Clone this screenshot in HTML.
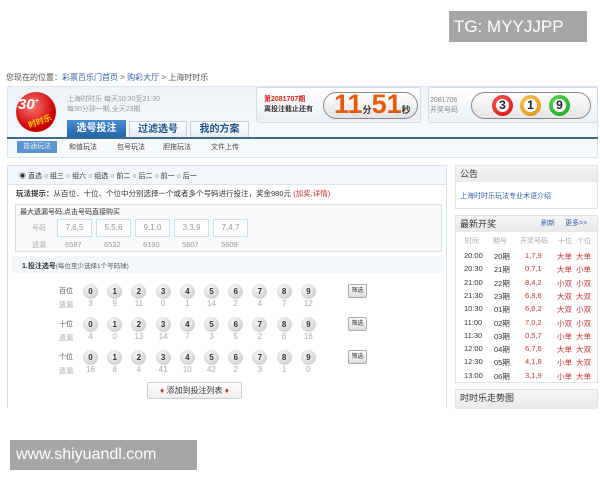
<!DOCTYPE html><html><head><meta charset="utf-8"><style>
*{margin:0;padding:0;box-sizing:border-box}
body{width:600px;height:480px;background:#fff;position:relative;overflow:hidden;font-family:"Liberation Sans","Noto Sans CJK SC",sans-serif;font-size:8px;color:#333}
.a{position:absolute;white-space:nowrap}
.ball{position:absolute;width:15px;height:15px;border-radius:50%;background:radial-gradient(circle at 40% 35%,#fafafa,#d8d8d8 60%,#bbb);font-size:8px;font-weight:bold;text-align:center;line-height:15px;color:#333}
.miss{position:absolute;font-size:8px;color:#aaa;width:15px;text-align:center}
.big{position:absolute;width:21px;height:21px;border-radius:50%;text-align:center;line-height:21px;font-weight:bold;font-size:12px;color:#222}
.big span{display:inline-block;width:13px;height:13px;line-height:13px;border-radius:50%;background:#fff;margin-top:4px}
.btn{position:absolute;width:19px;height:14px;border:1px solid #aaa;border-radius:2px;background:linear-gradient(#fff,#ddd);font-size:6px;text-align:center;line-height:12px}
.cell{position:absolute;width:35px;height:18px;border:1px solid #d5dde5;background:#fff;color:#999;text-align:center;line-height:16px;font-size:8px}
.r{color:#c33}
</style></head><body>
<div class="a" style="left:449px;top:11px;width:138px;height:31px;background:#a6a6a6;color:#fff;font-size:17px;line-height:31px;padding-left:5px">TG: MYYJJPP</div>
<div class="a" style="left:10px;top:440px;width:187px;height:30px;background:#a6a6a6;color:#fff;font-size:16px;line-height:30px;padding-left:6px">www.shiyuandl.com</div>

<div class="a" style="left:6px;top:72px;font-size:8px;color:#555">您现在的位置：<span style="color:#3a64a8">彩票百乐门首页</span> &gt; <span style="color:#3a64a8">购彩大厅</span> &gt; 上海时时乐</div>

<div class="a" style="left:7px;top:86px;width:591px;height:72px;background:linear-gradient(#eef3f9,#f9fbfd);border:1px solid #dde5ee"></div>
<div class="a" style="left:16px;top:92px;width:40px;height:40px;border-radius:50%;background:radial-gradient(circle at 40% 35%,#f77,#c00 65%,#900)"></div>
<div class="a" style="left:18px;top:96px;color:#fff;font-size:15px;font-weight:bold;font-style:italic">30<sup style="font-size:7px">+</sup></div>
<div class="a" style="left:28px;top:116px;color:#fc0;font-size:8px;font-weight:bold;transform:rotate(-20deg)">时时乐</div>
<div class="a" style="left:67px;top:95px;color:#999;font-size:7px;line-height:10px">上海时时乐 每天10:30至21:30<br>每30分钟一期,全天23期</div>
<div class="a" style="left:67px;top:120px;width:59px;height:18px;background:linear-gradient(#4a8ccc,#1f63a8);color:#fff;font-size:10px;font-weight:bold;text-align:center;line-height:18px">选号投注</div>
<div class="a" style="left:129px;top:121px;width:58px;height:17px;background:linear-gradient(#fff,#e6ecf3);border:1px solid #c5d0dc;color:#1f4f88;font-size:10px;font-weight:bold;text-align:center;line-height:16px">过滤选号</div>
<div class="a" style="left:190px;top:121px;width:59px;height:17px;background:linear-gradient(#fff,#e6ecf3);border:1px solid #c5d0dc;color:#1f4f88;font-size:10px;font-weight:bold;text-align:center;line-height:16px">我的方案</div>
<div class="a" style="left:7px;top:137px;width:591px;height:2px;background:#3d6a8f"></div>
<div class="a" style="left:17px;top:141px;width:40px;height:12px;background:#5b95d0;color:#e8f0ff;font-size:7px;text-align:center;line-height:12px">普通玩法</div>
<div class="a" style="left:69px;top:142px;font-size:7px;color:#444">和值玩法</div>
<div class="a" style="left:117px;top:142px;font-size:7px;color:#444">包号玩法</div>
<div class="a" style="left:163px;top:142px;font-size:7px;color:#444">胆拖玩法</div>
<div class="a" style="left:211px;top:142px;font-size:7px;color:#444">文件上传</div>

<div class="a" style="left:256px;top:87px;width:165px;height:36px;background:linear-gradient(#fff,#eaeff5);border:1px solid #d3dbe4;border-radius:3px"></div>
<div class="a" style="left:264px;top:95px;font-size:7px;line-height:10px;font-weight:bold"><span style="color:#d22">第2081707期</span><br>离投注截止还有</div>
<div class="a" style="left:323px;top:92px;width:95px;height:27px;border:1px solid #888;border-radius:14px;background:linear-gradient(#fff,#e4e4e4)"></div>
<div class="a" style="left:334px;top:89px;color:#e8590c;font-weight:bold;font-size:27px;line-height:30px">11<span style="font-size:9px;color:#333">分</span>51<span style="font-size:9px;color:#333">秒</span></div>
<div class="a" style="left:428px;top:87px;width:170px;height:36px;background:linear-gradient(#fff,#eaeff5);border:1px solid #d3dbe4;border-radius:3px"></div>
<div class="a" style="left:430px;top:96px;font-size:7px;line-height:10px;color:#888">2081706<br>开奖号码</div>
<div class="a" style="left:471px;top:92px;width:120px;height:27px;border:1px solid #888;border-radius:14px;background:linear-gradient(#fff,#e4e4e4)"></div>
<div class="big" style="left:492px;top:95px;background:radial-gradient(circle at 40% 35%,#f66,#c00)"><span>3</span></div>
<div class="big" style="left:520px;top:95px;background:radial-gradient(circle at 40% 35%,#fc6,#d80)"><span>1</span></div>
<div class="big" style="left:549px;top:95px;background:radial-gradient(circle at 40% 35%,#6d6,#191)"><span>9</span></div>

<div class="a" style="left:7px;top:165px;width:440px;height:243px;border:1px solid #d6e0ea;border-bottom:none;background:#fff"></div>
<div class="a" style="left:8px;top:166px;width:438px;height:19px;background:#f3f7fb;border-bottom:1px solid #dde5ee"></div>
<div class="a" style="left:19px;top:171px;font-size:7px;color:#333">◉ 直选 ○ 组三 ○ 组六 ○ 组选 ○ 前二 ○ 后二 ○ 前一 ○ 后一</div>
<div class="a" style="left:16px;top:188px;font-size:7.5px;color:#333"><b>玩法提示：</b>从百位、十位、个位中分别选择一个或者多个号码进行投注，奖金980元 <span class="r">(加奖,详情)</span></div>
<div class="a" style="left:15px;top:204px;width:427px;height:48px;border:1px solid #d6e0ea;background:#f8fafc"></div>
<div class="a" style="left:20px;top:207px;font-size:7px">最大遗漏号码,点击号码直接购买</div>
<div class="a" style="left:32px;top:223px;font-size:7px;color:#aaa">号码</div>
<div class="a" style="left:32px;top:240px;font-size:7px;color:#aaa">遗漏</div>
<div class="cell" style="left:57px;top:219px">7,6,5</div>
<div class="cell" style="left:96px;top:219px">5,5,6</div>
<div class="cell" style="left:135px;top:219px">9,1,0</div>
<div class="cell" style="left:174px;top:219px">3,3,9</div>
<div class="cell" style="left:213px;top:219px">7,4,7</div>
<div class="a" style="left:65px;top:240px;font-size:7.5px;color:#999">6587</div>
<div class="a" style="left:104px;top:240px;font-size:7.5px;color:#999">6532</div>
<div class="a" style="left:143px;top:240px;font-size:7.5px;color:#999">6190</div>
<div class="a" style="left:182px;top:240px;font-size:7.5px;color:#999">5807</div>
<div class="a" style="left:221px;top:240px;font-size:7.5px;color:#999">5609</div>
<div class="a" style="left:12px;top:256px;width:432px;height:17px;background:#f3f6fa"></div>
<div class="a" style="left:22px;top:260px;font-size:7px"><b>1.投注选号</b><span style="font-size:6.5px;color:#555">(每位至少选择1个号码球)</span></div>

<div class="a" style="left:59px;top:286px;font-size:7px;color:#555">百位</div><div class="a" style="left:59px;top:300px;font-size:7px;color:#aaa">遗漏</div>
<div class="a" style="left:59px;top:319px;font-size:7px;color:#555">十位</div><div class="a" style="left:59px;top:333px;font-size:7px;color:#aaa">遗漏</div>
<div class="a" style="left:59px;top:352px;font-size:7px;color:#555">个位</div><div class="a" style="left:59px;top:366px;font-size:7px;color:#aaa">遗漏</div>
<div id="balls"></div>
<div class="btn" style="left:348px;top:284px">筛选</div>
<div class="btn" style="left:348px;top:317px">筛选</div>
<div class="btn" style="left:348px;top:350px">筛选</div>
<div class="a" style="left:147px;top:382px;width:95px;height:17px;border:1px solid #ccc;border-radius:2px;background:linear-gradient(#fff,#eee);font-size:8px;text-align:center;line-height:15px"><span class="r">♦</span> 添加到投注列表 <span class="r">♦</span></div>

<div class="a" style="left:455px;top:165px;width:143px;height:44px;border:1px solid #dde3ea"></div>
<div class="a" style="left:456px;top:166px;width:141px;height:16px;background:linear-gradient(#f5f5f5,#e9e9e9);font-size:9px;padding-left:4px;line-height:16px">公告</div>
<div class="a" style="left:460px;top:191px;font-size:7px;color:#3a64a8">上海时时乐玩法专业术语介绍</div>
<div class="a" style="left:455px;top:215px;width:143px;height:168px;border:1px solid #dde3ea"></div>
<div class="a" style="left:456px;top:216px;width:141px;height:16px;background:linear-gradient(#f5f5f5,#e9e9e9);font-size:9px;padding-left:4px;line-height:16px">最新开奖<span style="position:absolute;left:85px;font-size:7px;color:#3a64a8">刷新</span><span style="position:absolute;left:109px;font-size:7px;color:#3a64a8">更多&gt;&gt;</span></div>
<div class="a" style="left:465px;top:236px;font-size:7px;color:#aaa"><span style="position:absolute;left:0">时间</span><span style="position:absolute;left:28px">期号</span><span style="position:absolute;left:55px">开奖号码</span><span style="position:absolute;left:93px">十位</span><span style="position:absolute;left:112px">个位</span></div>
<div id="rows"></div>
<div class="a" style="left:455px;top:389px;width:143px;height:20px;border:1px solid #dde3ea;border-bottom:none;background:linear-gradient(#f5f5f5,#e9e9e9);font-size:9px;padding-left:4px;line-height:17px">时时乐走势图</div>
<script>
var m=[[3,9,11,0,1,14,2,4,7,12],[4,0,13,14,7,3,5,2,6,16],[16,8,4,41,10,42,2,3,1,0]],ys=[284,317,350],h='';
for(var r=0;r<3;r++)for(var i=0;i<10;i++){var x=83+i*24.2;h+='<div class="ball" style="left:'+x+'px;top:'+ys[r]+'px">'+i+'</div><div class="miss" style="left:'+x+'px;top:'+(ys[r]+15)+'px">'+m[r][i]+'</div>';}
document.getElementById('balls').innerHTML=h;
var d=[["20:00","20期","1,7,9","大单","大单"],["20:30","21期","0,7,1","大单","小单"],["21:00","22期","8,4,2","小双","小双"],["21:30","23期","6,8,6","大双","大双"],["10:30","01期","6,6,2","大双","小双"],["11:00","02期","7,0,2","小双","小双"],["11:30","03期","0,5,7","小单","大单"],["12:00","04期","6,7,6","大单","大双"],["12:30","05期","4,1,8","小单","大双"],["13:00","06期","3,1,9","小单","大单"]],g='';
for(var k=0;k<10;k++){var y=251+k*13.3,e=d[k];g+='<div class="a" style="left:464px;top:'+y+'px;font-size:7.5px;color:#333">'+e[0]+'</div><div class="a" style="left:494px;top:'+y+'px;font-size:7.5px">'+e[1]+'</div><div class="a r" style="left:525px;top:'+y+'px;font-size:7.5px">'+e[2]+'</div><div class="a r" style="left:557px;top:'+y+'px;font-size:7.5px">'+e[3]+'</div><div class="a r" style="left:576px;top:'+y+'px;font-size:7.5px">'+e[4]+'</div>';}
document.getElementById('rows').innerHTML=g;
</script>
</body></html>
